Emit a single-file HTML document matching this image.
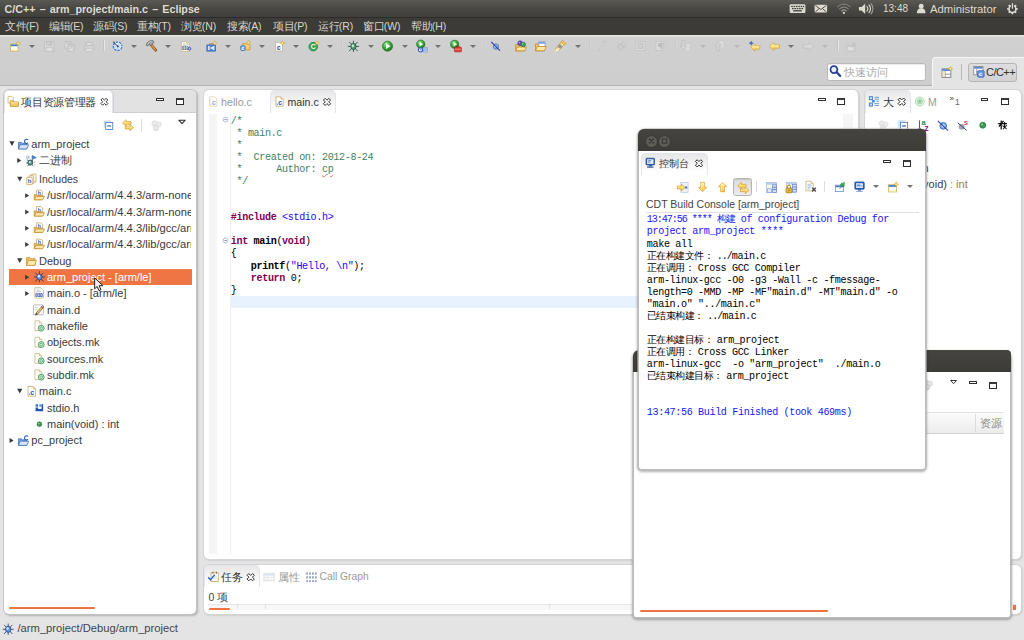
<!DOCTYPE html>
<html lang="zh">
<head>
<meta charset="utf-8">
<title>C/C++ - arm_project/main.c - Eclipse</title>
<style>
*{box-sizing:border-box;margin:0;padding:0}
html,body{width:1024px;height:640px;overflow:hidden}
body{position:relative;background:#e4e4e4;font-family:"Liberation Sans",sans-serif;font-size:11px;color:#3c3c3c}
.abs,.abs>*{position:absolute}
.t{position:absolute;white-space:pre;line-height:14px;height:14px}
svg{position:absolute;overflow:visible}
/* top panel */
#panel{left:0;top:0;width:1024px;height:18px;background:linear-gradient(#5a5954,#4a4944 45%,#403f3b);border-bottom:1px solid #2c2b28}
#panel .t{color:#dfdbd2;top:1.5px}
#menubar{left:0;top:18px;width:1024px;height:17px;background:#3c3b37}
#menubar .t{color:#d9d5cc;top:.5px;font-size:10.5px;letter-spacing:-.1px}
/* toolbar */
#toolbar{left:0;top:35px;width:1024px;height:51px;background:linear-gradient(#e9e9e9 0,#dcdcdc 1.6px,#d0d0d0 3px,#cecece);border-bottom:1px solid #b2b2b2}
#persp{left:932px;top:57px;width:92px;height:30px;background:#e4e4e4;border-left:1px solid #f6f6f6;border-top:1px solid #f6f6f6;border-top-left-radius:4px}
.dd{position:absolute;width:0;height:0;border-left:3px solid transparent;border-right:3px solid transparent;border-top:3.4px solid #727272}
.dd.dis{border-top-color:#b9b9b9}
.sep{position:absolute;width:1px;background:#b6b6b6;box-shadow:1px 0 0 #e6e6e6}
/* panels */
.pane{position:absolute;background:#fff;border-radius:5px;box-shadow:0 0 0 1px #d4d4d4,1px 1px 2px rgba(0,0,0,.25)}
.tabbar{position:absolute;left:0;top:0;right:0;height:23px;background:#e2e2e2;border-radius:5px 5px 0 0;border-bottom:1px solid #d0d0d0}
.tab{position:absolute;top:0;height:23px;background:linear-gradient(#e7e7e7,#f3f3f3 45%,#fff 88%);border-radius:5px 5px 0 0;border:1px solid #e2e4ee;border-bottom:none}
.min{position:absolute;width:7.8px;height:3.2px;border:1px solid #2d2d2d;border-radius:.5px;background:#fff}
.max{position:absolute;width:8px;height:7.3px;border:1px solid #2d2d2d;border-top:2px solid #3a3a3a;background:#fff}
.orange{position:absolute;height:2px;background:#ee7442;border-radius:1px}
/* tree */
.row{position:absolute;left:0;height:16.5px;width:100%}
.row .t{top:1.5px;font-size:11px;color:#3a3a3a}
/* mono */
.code{position:absolute;white-space:pre;font-family:"Liberation Mono",monospace;font-size:10.1px;letter-spacing:-.36px;line-height:12.07px;color:#000}
.nr{letter-spacing:-1.06px}
.cj{display:inline-block;overflow:hidden;white-space:nowrap;height:12px;vertical-align:top;font-size:9.5px;letter-spacing:-.5px}
.tb{display:inline-block;width:20px}
.cw{display:inline-block;width:20.8px;height:14px;overflow:hidden;vertical-align:top;white-space:nowrap}
.cm{color:#3f7f5f}.kw{color:#7f0055;font-weight:bold}.st{color:#2a00ff}.b{font-weight:bold}
.blue{color:#1a14ff}
/* popup windows */
.win{position:absolute;background:#fff;border-radius:6px 6px 3px 3px;box-shadow:0 0 0 1.6px #bcbcbc,0 1px 2.5px 1.8px rgba(0,0,0,.3)}
.wtitle{position:absolute;left:-1.5px;right:-1.5px;top:-1.5px;height:23px;background:linear-gradient(#45443f,#3c3b37);border-radius:6px 4px 0 0}
.wbtn{position:absolute;width:11px;height:11px;border-radius:50%;background:#5e5c57;top:6px;box-shadow:0 0 0 .5px #33322e}
</style>
</head>
<body>
<svg width="0" height="0" style="left:0;top:0"><defs>
<radialGradient id="gg" cx=".38" cy=".3" r=".8"><stop offset="0" stop-color="#a6e6a0"/><stop offset=".45" stop-color="#3cae3c"/><stop offset="1" stop-color="#156c15"/></radialGradient>
<linearGradient id="gy" x1="0" y1="0" x2="0" y2="1"><stop offset="0" stop-color="#fff7cc"/><stop offset=".5" stop-color="#fce07c"/><stop offset="1" stop-color="#f5c246"/></linearGradient>
<g id="i-arr_d"><path d="M0 0h5.200L2.600 4.700z" fill="#3a3a3a"/></g>
<g id="i-arr_r"><path d="M0 0v5L4 2.500z" fill="#3a3a3a"/></g>
<g id="i-azsort"><path d="M2.500 1.500v12" stroke="#444" stroke-width="1.200"/><path d="M.5 11.500l2 3 2-3z" fill="#444"/><text x="5" y="7.500" font-size="10" font-weight="bold" fill="#1f8a4a" font-family="Liberation Sans">a</text><text x="9" y="15.800" font-size="11" font-weight="bold" fill="#8a1f9a" font-family="Liberation Sans">z</text></g>
<g id="i-back"><path d="M1 8.2L7.2 2.6v3.2h7.6v4.8H7.2v3.2z" fill="url(#gy)" stroke="#d39a26" stroke-width=".9" stroke-linejoin="round"/><path d="M3.2 8l3-2.8v1.9h7.4" stroke="#fff3b8" stroke-width=".8" fill="none"/></g>
<g id="i-binaries"><g stroke="#274a44" stroke-width="1" fill="none"><path d="M2.500 6.500l2.500 2M1.500 11h3M3 15l2.500-2M11 15l-2-2"/></g><circle cx="7" cy="10.500" r="3.400" fill="#5a9a90" stroke="#224a44"/><circle cx="6.400" cy="9.800" r="1.300" fill="#cfe8e0"/><path d="M9.500 1v8" stroke="#444" stroke-width="1"/><path d="M10 1.500l5 2.300-5 2.300z" fill="#3f86d6" stroke="#2a5fae" stroke-width=".6"/><path d="M2.500 1.500v4M5 1.500v4" stroke="#7a8aa8" stroke-width="1.100"/><path d="M13 9v2M13 12.500v2" stroke="#aaa" stroke-width="1"/></g>
<g id="i-bindoc"><path d="M2.5 1.5h7.5l3.5 3.5v9.5h-11z" fill="#fff" stroke="#c9ae6e"/><path d="M10 1.5v3.5h3.5" fill="#f3e8c7" stroke="#c9ae6e" stroke-width=".8"/><path d="M4.5 4.5h4M4.5 6.5h6" stroke="#9fb9e2"/><text x="2.9" y="13.3" font-size="6.2" font-weight="bold" fill="#27479b" font-family="Liberation Sans" letter-spacing="-.3">010</text><circle cx="13.6" cy="11.2" r="1.9" fill="none" stroke="#27479b" stroke-width="1"/></g>
<g id="i-blkstar"><g stroke="#111" stroke-width="1.900" fill="none"><path d="M5.500 1v13.500M1 5.500h13M2 10l3.500-4.500M9 1.500L5.500 5.500M10.500 3v9"/><path d="M7.500 8.500l6 5M14 8l-6 6" stroke-width="1.500"/></g></g>
<g id="i-bug"><g stroke="#1d3b33" stroke-width="1.05" fill="none" stroke-linecap="round"><path d="M8 1v3.5M2.6 2.6l3.2 3.2M13.4 2.6l-3.2 3.2M.8 8.4h4.2M15.2 8.4h-4.2M2.4 14.6l3.4-3.6M13.6 14.6l-3.4-3.6M8 15.6v-3"/></g><ellipse cx="8" cy="8.4" rx="3.7" ry="4.3" fill="#4b9c7e" stroke="#1d4a3c"/><ellipse cx="7.2" cy="7.4" rx="1.7" ry="2.1" fill="#c2e6c6"/></g>
<g id="i-bug_d"><g stroke="#bdbdbd" stroke-width="1" fill="none"><path d="M3 4l3 2.5M13 4l-3 2.5M2 9h3.5M14 9h-3.5M3.5 14l3-2.5"/></g><ellipse cx="7.6" cy="9.2" rx="3.4" ry="3.8" fill="#cfcfcf" stroke="#bdbdbd"/><circle cx="11.6" cy="5" r="2.6" fill="#d4d4d4" stroke="#bdbdbd" stroke-width=".8"/></g>
<g id="i-buildcfg"><circle cx="8" cy="8" r="5.7" fill="#f2f7fd" stroke="#3f7cc0" stroke-width="1.9"/><circle cx="8" cy="8" r="5.7" fill="none" stroke="#eaf2fb" stroke-width="2.1" stroke-dasharray="1.2 3.27"/><circle cx="8" cy="8" r="3.2" fill="none" stroke="#9cc0e6" stroke-width=".8"/><circle cx="8.3" cy="8.2" r="1.5" fill="#24508c"/><path d="M2.2 1.8L8 7.8" stroke="#33406f" stroke-width="1.3"/><path d="M2 1.5l2.6 .6l-2 2z" fill="#566"/></g>
<g id="i-callgraph"><g fill="#9aa8c4"><rect x="1.500" y="2" width="2.400" height="3"/><rect x="5.200" y="2" width="2.400" height="3"/><rect x="9" y="2" width="2.400" height="3"/><rect x="12.700" y="2" width="2.400" height="3"/><rect x="1.500" y="7" width="2.400" height="3"/><rect x="5.200" y="7" width="2.400" height="3"/><rect x="9" y="7" width="2.400" height="3"/><rect x="12.700" y="7" width="2.400" height="3"/><rect x="1.500" y="12" width="2.400" height="2.500"/><rect x="5.200" y="12" width="2.400" height="2.500"/><rect x="9" y="12" width="2.400" height="2.500"/><rect x="12.700" y="12" width="2.400" height="2.500"/></g></g>
<g id="i-cfile"><path d="M2.500 1.500h7l3 3v10h-10z" fill="#fff" stroke="#c4a25a"/><path d="M9.500 1.500v3h3" fill="#f3e8c7" stroke="#c4a25a" stroke-width=".8"/><rect x="3.600" y="11" width="1.600" height="1.500" fill="#5f86d0"/><text x="5.600" y="12.600" font-size="9.500" font-weight="bold" fill="#2c54b4" font-family="Liberation Sans">c</text></g>
<g id="i-cfile_g"><path d="M2.500 1.500h7l3 3v10h-10z" fill="#fff" stroke="#dcc99a"/><rect x="3.600" y="11" width="1.600" height="1.500" fill="#b4c6ea"/><text x="5.600" y="12.600" font-size="9.500" font-weight="bold" fill="#8fa8dc" font-family="Liberation Sans">c</text></g>
<g id="i-clearcon"><path d="M1.500 1.500h6.500l3 3v9.500h-9.500z" fill="#fff" stroke="#c9ae6e"/><path d="M8 1.500v3h3" fill="#f3e8c7" stroke="#c9ae6e" stroke-width=".8"/><path d="M3.500 5.500h4M3.500 7.500h5.500M3.500 9.500h4.500M3.500 11.500h3" stroke="#8fb0e0" stroke-width="1"/><path d="M9.500 10l4.800 4.800M14.300 10L9.500 14.800" stroke="#4a4a4a" stroke-width="1.800"/></g>
<g id="i-collapse"><path d="M2.500 11.500v-9h9" fill="none" stroke="#9eb7de" stroke-width="1"/><rect x="4.500" y="4.500" width="10" height="10" fill="#fff" stroke="#4a7cc8" stroke-width="1.200"/><path d="M6.800 9.500h5.400" stroke="#2c57a8" stroke-width="1.600"/></g>
<g id="i-con1"><rect x="1.500" y="1.500" width="13" height="12.500" fill="#f4f8e4" stroke="#9cb4dc" stroke-width=".9"/><rect x="2" y="2" width="12" height="2.400" fill="#b9cdee"/><rect x="9.500" y="4.500" width="5" height="9.500" fill="#dce6f8" stroke="#5f86cc" stroke-width=".9"/><path d="M10 7.500h4M10 10.500h4" stroke="#3f68b8" stroke-width="1"/><rect x="3" y="9.500" width="5" height="4.500" fill="#e6ecfa" stroke="#7f9cd4" stroke-width=".8"/></g>
<g id="i-con2"><rect x="1.500" y="1.500" width="13" height="12.500" fill="#f4f8e4" stroke="#9cb4dc" stroke-width=".9"/><rect x="2" y="2" width="12" height="2.400" fill="#b9cdee"/><rect x="9.500" y="4.500" width="5" height="9.500" fill="#dce6f8" stroke="#5f86cc" stroke-width=".9"/><path d="M10 7.500h4M10 10.500h4" stroke="#3f68b8" stroke-width="1"/><rect x="3" y="9.500" width="5" height="4.500" fill="#e6ecfa" stroke="#7f9cd4" stroke-width=".8"/><rect x="1" y="9" width="7.500" height="6" rx="1" fill="#f0bf3c" stroke="#a8780e" stroke-width=".9"/><path d="M2.800 9V7.200a2 2 0 0 1 4 0V9" fill="none" stroke="#a8780e" stroke-width="1.200"/><rect x="4.200" y="11" width="1.200" height="2" fill="#7a5408"/></g>
<g id="i-console"><rect x="1.500" y="1.500" width="12" height="9.500" rx="1" fill="#2f64b8" stroke="#1d4488"/><rect x="3" y="3" width="9" height="6.500" fill="#e9f1fc"/><path d="M4 5h5M4 7h3.500" stroke="#2f64b8" stroke-width="1"/><path d="M5.500 11v2h4v-2" fill="#2f64b8"/><path d="M3 14h9" stroke="#1d4488" stroke-width="1.600"/></g>
<g id="i-cpersp"><rect x="1.500" y="1.500" width="12" height="11" fill="#fff" stroke="#7a7a8a"/><rect x="2" y="2" width="11" height="2.400" fill="#5f86cc"/><path d="M5 4.500v8M5 8.500h8.500" stroke="#8a8a9a" stroke-width=".9"/><rect x="6.500" y="7" width="8.500" height="8.500" rx="1.200" fill="#6f9ce6" stroke="#2a54a8"/><text x="8" y="14.300" font-size="8" font-weight="bold" fill="#fff" font-family="Liberation Sans">c</text></g>
<g id="i-cproj"><path d="M1.500 5.500h4l1.200 1.400h5.800v7.600h-11z" fill="#7ea6e2" stroke="#3a66b4"/><path d="M1.500 14.500l2.400-5.800h11.600l-2.400 5.800z" fill="#d4e3f9" stroke="#3a66b4" stroke-linejoin="round"/><path d="M14.800 2.200a2.900 2.900 0 1 0 0 4" fill="none" stroke="#2f5cae" stroke-width="1.500"/></g>
<g id="i-cursor"><path d="M1 1v12.500l2.900-2.700 2 4.700 2.300-1-2-4.600h4.200z" fill="#f2f2f2" stroke="#1c1c1c" stroke-width="1.100" stroke-linejoin="round"/></g>
<g id="i-dfile"><rect x="1.500" y="1.500" width="13" height="13" rx="1" fill="#fafafa" stroke="#a9a9a9"/><path d="M3.500 5h4M3.500 7.500h3" stroke="#c8c8c8"/><path d="M5 12.200L11.800 4.200l2 1.700L7 13.900l-2.800 1z" fill="#f1c84c" stroke="#4a4a4a" stroke-width=".8"/><path d="M11.800 4.200l1.400-1.600 2 1.700-1.400 1.600z" fill="#e58aa8" stroke="#4a4a4a" stroke-width=".7"/><path d="M4.200 14.900L5 12.200 7 13.900z" fill="#333"/></g>
<g id="i-dispcon"><rect x="1.500" y="1.500" width="13" height="10" rx="1" fill="#2c62c0" stroke="#1c4494"/><rect x="3.200" y="3.200" width="9.600" height="6.600" fill="#dfeafb"/><rect x="4.200" y="5" width="5" height="2.500" fill="#5f8fdc"/><path d="M9.500 7h2.500" stroke="#2c62c0"/><path d="M6 11.500v2h4v-2" fill="#2c62c0"/><path d="M3.500 14.500h9" stroke="#7f9cd4" stroke-width="1.400"/></g>
<g id="i-downy"><path d="M8 15L2 8.800h3.200V1.500h5.600v7.300H14z" fill="url(#gy)" stroke="#d39a26" stroke-width=".9" stroke-linejoin="round"/><path d="M6.400 2.600v7.200" stroke="#fff3b8" stroke-width=".9"/></g>
<g id="i-exe"><g stroke="#1f2f5c" stroke-width="1.100" fill="none" stroke-linecap="round"><path d="M8 .8v3.500M2.600 2.600l3.200 3.200M13.400 2.600l-3.200 3.200M.8 8.400h4.200M15.200 8.400h-4.200M2.400 14.600l3.400-3.600M13.600 14.600l-3.400-3.600M8 15.600v-3"/></g><ellipse cx="8" cy="8.400" rx="3.800" ry="4.300" fill="#5b8fe0" stroke="#1f3f8c"/><ellipse cx="7.200" cy="7.400" rx="1.700" ry="2" fill="#d6e6fb"/></g>
<g id="i-filt_d"><circle cx="5.500" cy="5.500" r="3.600" fill="#e3e3e3" stroke="#d2d2d2"/><circle cx="11" cy="6.500" r="3" fill="#e6e6e6" stroke="#d4d4d4"/><circle cx="7" cy="11" r="3.600" fill="#dedede" stroke="#cecece"/></g>
<g id="i-fold"><circle cx="3" cy="3" r="2.500" fill="#fff" stroke="#9fb2cc" stroke-width=".8"/><path d="M1.600 3h2.800" stroke="#7f94b4" stroke-width=".9"/></g>
<g id="i-folder"><path d="M1.500 3.500h4.500l1.200 1.500h6.300v9.500h-12z" fill="#efc06a" stroke="#c08a2a"/><path d="M1.500 14.500l2.500-7h11.500l-2.500 7z" fill="#fde9ac" stroke="#c08a2a" stroke-linejoin="round"/></g>
<g id="i-func"><circle cx="8" cy="8" r="3.300" fill="#3f9650" stroke="#2a7a3c" stroke-width=".8"/><circle cx="7.200" cy="7.200" r="1.100" fill="#8fd29c"/></g>
<g id="i-fwd_d"><path d="M15 8.2L8.800 2.600v3.200H1.200v4.800h7.600v3.200z" fill="#d9d9d9" stroke="#bdbdbd" stroke-width=".9" stroke-linejoin="round"/></g>
<g id="i-hammer"><path d="M6.8 5.8L13.3 13.6" stroke="#7d4413" stroke-width="3.6" stroke-linecap="round"/><path d="M6.8 5.8L13.3 13.6" stroke="#c98a4c" stroke-width="2.1" stroke-linecap="round"/><path d="M7.2 5.6l5.4 6.6" stroke="#e6b57c" stroke-width=".7"/><path d="M1.2 7.2C2 4 5 1 9.6 1.4L11.2 3.6L7 7.9L5.4 6.2L3.2 8.2Z" fill="#a1a1a1" stroke="#5c5c5c" stroke-width=".9" stroke-linejoin="round"/><path d="M3 6.2C4 4.2 6 2.6 9 2.6" stroke="#d6d6d6" stroke-width=".9" fill="none"/></g>
<g id="i-hidefld"><circle cx="8.400" cy="8.400" r="4.600" fill="#7fb0ea" stroke="#2f68c0" stroke-width="1.200"/><circle cx="8.400" cy="8.400" r="2.200" fill="#d6e6fa"/><path d="M1 1.600L15 15" stroke="#2b3da4" stroke-width="1.400"/></g>
<g id="i-hidestat"><circle cx="6.500" cy="10" r="3.600" fill="#a9a9a9" stroke="#8a8a8a" stroke-width=".8"/><path d="M1 4.500L13.500 15" stroke="#2b3da4" stroke-width="1.300"/><text x="9.800" y="7.200" font-size="8" font-weight="bold" fill="#d0283c" font-family="Liberation Sans">S</text></g>
<g id="i-inc"><rect x="2.500" y="3" width="3.800" height="3.800" fill="#2f6fd0"/><rect x="8.400" y="3" width="3.200" height="3.800" fill="#5b94e6"/><path d="M2.500 8h4v2.500h5.500v-7.500h2.500v11h-12z" fill="#1f56b6"/></g>
<g id="i-incfold"><path d="M4.500 1.500h6.500l2 2v7h-8.500z" fill="#fff" stroke="#c4a25a"/><text x="6.400" y="8.600" font-size="7" font-weight="bold" fill="#2e58b8" font-family="Liberation Sans">h</text><path d="M1.500 7.500h3.500l1 1.200h6.500v5.800h-11z" fill="#efc06a" stroke="#c08a2a"/><path d="M1.500 14.500l2.300-4.600h11.700l-2.300 4.600z" fill="#fde6a6" stroke="#c08a2a" stroke-linejoin="round"/></g>
<g id="i-includes"><path d="M7.500 1.500h6v10h-6z" fill="#fff" stroke="#c4a25a"/><path d="M4.500 3.500h6v10h-6z" fill="#fff" stroke="#c4a25a"/><path d="M1.500 5.500h7v9.500h-7z" fill="#fffdf2" stroke="#c4a25a"/><text x="2.800" y="13.200" font-size="7.500" font-weight="bold" fill="#2e58b8" font-family="Liberation Sans">h</text></g>
<g id="i-kbd"><rect x=".5" y=".5" width="20" height="11" rx="1.500" fill="#dfdbd2"/><g fill="#3c3b37"><rect x="2.500" y="2.500" width="2" height="1.600"/><rect x="5.500" y="2.500" width="2" height="1.600"/><rect x="8.500" y="2.500" width="2" height="1.600"/><rect x="11.500" y="2.500" width="2" height="1.600"/><rect x="14.500" y="2.500" width="2" height="1.600"/><rect x="17.500" y="2.500" width="1.500" height="1.600"/><rect x="3.500" y="5.200" width="2" height="1.600"/><rect x="6.500" y="5.200" width="2" height="1.600"/><rect x="9.500" y="5.200" width="2" height="1.600"/><rect x="12.500" y="5.200" width="2" height="1.600"/><rect x="15.500" y="5.200" width="2" height="1.600"/><rect x="5" y="8" width="11" height="1.600"/></g></g>
<g id="i-lastedit"><path d="M2.4 9L8 4v2.8h7v4.6H8v2.8z" fill="url(#gy)" stroke="#d39a26" stroke-width=".9" stroke-linejoin="round"/><path d="M4.4 8.8l2.6-2.4v1.7h6.8" stroke="#fff3b8" stroke-width=".8" fill="none"/><path d="M2.8 0L3.6 2.2L5.8 3L3.6 3.8L2.8 6L2 3.8L-.2 3L2 2.2Z" fill="#3b6fd0" stroke="#1f4aa0" stroke-width=".5"/></g>
<g id="i-link"><path d="M.8 5l4.700-4.200v2.400h6.300v3.600H5.500v2.400z" fill="url(#gy)" stroke="#d39a26" stroke-width=".9" stroke-linejoin="round"/><path d="M15.400 11l-4.700-4.200v2.400H4.400v3.600h6.300v2.400z" fill="url(#gy)" stroke="#d39a26" stroke-width=".9" stroke-linejoin="round"/></g>
<g id="i-magnify"><circle cx="6.500" cy="6.500" r="4.400" fill="#e8effa" stroke="#2a3f9c" stroke-width="2.300"/><path d="M10 10l4.500 4.500" stroke="#2a3f9c" stroke-width="2.800" stroke-linecap="round"/><path d="M4.300 5.500a2.600 2.600 0 0 1 2.500-1.800" stroke="#fff" stroke-width="1" fill="none"/></g>
<g id="i-mail"><rect x=".6" y=".6" width="15.800" height="9.800" rx="1" fill="#dfdbd2"/><path d="M1.500 1.500l7 5.200 7-5.200M1.500 9.800l5-4.300M15.500 9.800l-5-4.300" fill="none" stroke="#3c3b37" stroke-width="1.100"/></g>
<g id="i-maketgt"><circle cx="8" cy="8" r="6.300" fill="#eaf6ea" stroke="#9fd2a8" stroke-width="1.200"/><circle cx="8" cy="8" r="3.600" fill="#bfe4c4" stroke="#8fca9a" stroke-width="1"/><circle cx="8" cy="8" r="1.500" fill="#6fb87c"/></g>
<g id="i-marker"><path d="M2.200 14L11.400 3.400" stroke="#c4933a" stroke-width="5.400" stroke-linecap="butt"/><path d="M2.200 14L11.400 3.400" stroke="#fadf92" stroke-width="4" stroke-linecap="butt"/><path d="M3.400 14.400L12 4.600" stroke="#fff3c8" stroke-width="1.100"/><path d="M9.600 1.600l4.600 3.900-1.800 2.100-4.600-3.900z" fill="#f6c75a" stroke="#c4933a" stroke-width=".8"/><circle cx="6.400" cy="9.200" r="2" fill="#9a9aa8" stroke="#70707e" stroke-width=".6"/><path d="M.6 15.600l1-3.600 3.400 2.800z" fill="#fffbe6" stroke="#e0d29a" stroke-width=".5"/></g>
<g id="i-mkfile"><path d="M2.500 1.500h6l3 3v10h-9z" fill="#fff" stroke="#c9ae6e"/><path d="M8.500 1.500v3h3" fill="#f3e8c7" stroke="#c9ae6e" stroke-width=".8"/><circle cx="10.800" cy="11.300" r="3.900" fill="#dff3e2" stroke="#3a9a54" stroke-width="1.200"/><circle cx="10.800" cy="11.300" r="1.800" fill="none" stroke="#3a9a54" stroke-width="1"/></g>
<g id="i-new"><rect x="1.5" y="4.5" width="10.5" height="10" fill="#fffdf0" stroke="#c9a94f"/><rect x="2" y="5" width="9.5" height="2.6" fill="#3f80d2"/><path d="M2 13.5h9.5" stroke="#f3e6a8" stroke-width="1.4"/><path d="M12.3 0.30000000000000027L13.224 2.676L15.600000000000001 3.6L13.224 4.524L12.3 6.9L11.376000000000001 4.524L9.0 3.6L11.376000000000001 2.676Z" fill="#fbd94c" stroke="#c9991a" stroke-width=".6" stroke-linejoin="round"/><circle cx="12.3" cy="3.6" r="0.9899999999999999" fill="#fff6c0"/></g>
<g id="i-newcfile"><path d="M2.5 2.5h9.5v12h-9.5z" fill="#fff" stroke="#b9ad90"/><path d="M3.5 13.5h7.5" stroke="#e4e0d4"/><text x="4.2" y="12.4" font-size="9.6" font-weight="bold" fill="#2a46b8" font-family="Liberation Sans">c</text><path d="M11.8 0.19999999999999973L12.696000000000002 2.5039999999999996L15.0 3.4L12.696000000000002 4.296L11.8 6.6L10.904 4.296L8.600000000000001 3.4L10.904 2.5039999999999996Z" fill="#fbd94c" stroke="#c9991a" stroke-width=".6" stroke-linejoin="round"/><circle cx="11.8" cy="3.4" r="0.96" fill="#fff6c0"/></g>
<g id="i-newclass"><circle cx="7.2" cy="8.8" r="6.2" fill="#2f9f50" stroke="#1a7a36"/><circle cx="7.2" cy="8.8" r="5" fill="none" stroke="#5dc27a" stroke-width=".7"/><text x="3.6" y="12.3" font-size="9.6" font-weight="bold" fill="#fff" font-family="Liberation Sans">C</text><path d="M12.6 0.3999999999999999L13.468 2.6319999999999997L15.7 3.5L13.468 4.368L12.6 6.6L11.732 4.368L9.5 3.5L11.732 2.6319999999999997Z" fill="#fbd94c" stroke="#c9991a" stroke-width=".6" stroke-linejoin="round"/><circle cx="12.6" cy="3.5" r="0.9299999999999999" fill="#fff6c0"/></g>
<g id="i-newcon"><rect x="1.500" y="4.500" width="11.500" height="10" fill="#fffdf0" stroke="#c9a94f"/><rect x="2" y="5" width="10.500" height="2.500" fill="#3f80d2"/><path d="M2 13.700h10.500" stroke="#f3e6a8" stroke-width="1.200"/><path d="M12.3 0.3999999999999999L13.252 2.848L15.700000000000001 3.8L13.252 4.752L12.3 7.199999999999999L11.348 4.752L8.9 3.8L11.348 2.848Z" fill="#fbd94c" stroke="#c9991a" stroke-width=".6" stroke-linejoin="round"/><circle cx="12.3" cy="3.8" r="1.02" fill="#fff6c0"/></g>
<g id="i-newcproj"><path d="M5 6V4.300h5.500V6" fill="none" stroke="#a07a6a" stroke-width="1.100"/><rect x="1.500" y="6" width="12" height="8.500" fill="#4f86dc" stroke="#2a5cb4"/><rect x="3" y="7.500" width="9" height="5.500" fill="#dbe8fb"/><text x="5" y="13" font-size="6.800" font-weight="bold" fill="#2a5cb4" font-family="Liberation Sans">C</text><path d="M12.6 0.19999999999999973L13.496 2.5039999999999996L15.8 3.4L13.496 4.296L12.6 6.6L11.703999999999999 4.296L9.399999999999999 3.4L11.703999999999999 2.5039999999999996Z" fill="#fbd94c" stroke="#c9991a" stroke-width=".6" stroke-linejoin="round"/><circle cx="12.6" cy="3.4" r="0.96" fill="#fff6c0"/></g>
<g id="i-newsrcf"><path d="M4.5 4.5h3.6l1.2 1.6h5.2v7.4h-10z" fill="#f7cf6a" stroke="#c58d26"/><path d="M5 7h9" stroke="#fbe6a8"/><rect x="1.5" y="7.5" width="6.4" height="6.8" rx="1.4" fill="#7fa9e8" stroke="#3766b6"/><text x="2.7" y="13.2" font-size="6.8" font-weight="bold" fill="#fff" font-family="Liberation Sans">c</text><path d="M12.4 0.19999999999999973L13.268 2.4319999999999995L15.5 3.3L13.268 4.168L12.4 6.4L11.532 4.168L9.3 3.3L11.532 2.4319999999999995Z" fill="#fbd94c" stroke="#c9991a" stroke-width=".6" stroke-linejoin="round"/><circle cx="12.4" cy="3.3" r="0.9299999999999999" fill="#fff6c0"/></g>
<g id="i-nextann_d"><rect x="6" y="5" width="8" height="10" fill="#dadada" stroke="#c6c6c6" stroke-width=".8"/><path d="M3.2 1.5h3.6v7h2.6L5 14 .6 8.5h2.6z" fill="#d4d4d4" stroke="#bdbdbd" stroke-width=".9" stroke-linejoin="round"/></g>
<g id="i-objfile"><path d="M2.500 1.500h7.500l3.500 3.500v9.500h-11z" fill="#fff" stroke="#c9ae6e"/><path d="M4.500 4.500h4M4.500 6.500h6" stroke="#9fb9e2"/><rect x="3" y="8.500" width="10" height="5.500" fill="#e4ecfa"/><text x="3" y="13.600" font-size="6.200" font-weight="bold" fill="#27479b" font-family="Liberation Sans" letter-spacing="-.35">010</text></g>
<g id="i-openfold"><path d="M1.5 5.5h4l1.2 1.4h6.4v7.6h-11.6z" fill="#efc06a" stroke="#c08a2a"/><rect x="5.8" y="3" width="8" height="6.5" fill="#fff" stroke="#6d8fca" stroke-width=".9"/><rect x="6.2" y="3.4" width="7.2" height="1.8" fill="#5c8ad8"/><path d="M1.5 14.5l2.3-5.6h11.6l-2.3 5.6z" fill="#fde6a6" stroke="#c08a2a" stroke-linejoin="round"/></g>
<g id="i-openpersp"><rect x="1.500" y="3.500" width="11.500" height="11" fill="#fff" stroke="#6a6a7a"/><rect x="2" y="4" width="10.500" height="2.400" fill="#5f86cc"/><path d="M5.500 6.500v8M5.500 10.500h7.500" stroke="#6a6a7a" stroke-width=".9"/><rect x="2.500" y="7" width="2.500" height="7" fill="#f6e9b4"/><path d="M12.4 0.2999999999999998L13.268 2.532L15.5 3.4L13.268 4.268L12.4 6.5L11.532 4.268L9.3 3.4L11.532 2.532Z" fill="#fbd94c" stroke="#c9991a" stroke-width=".6" stroke-linejoin="round"/><circle cx="12.4" cy="3.4" r="0.9299999999999999" fill="#fff6c0"/></g>
<g id="i-opentype"><path d="M1.5 6.5h4l1.2 1.4h6.4v6.6h-11.6z" fill="#efc06a" stroke="#c08a2a"/><path d="M1.5 14.5l2.3-5h11.6l-2.3 5z" fill="#fde6a6" stroke="#c08a2a" stroke-linejoin="round"/><circle cx="7.2" cy="4.6" r="3.1" fill="#6a4fc4" stroke="#3f2b8a" stroke-width=".7"/><circle cx="6.3" cy="3.7" r="1" fill="#b9a8f0"/><circle cx="11.4" cy="6.2" r="3" fill="#39a458" stroke="#1c6d34" stroke-width=".7"/><circle cx="10.6" cy="5.4" r=".9" fill="#a6e3b4"/></g>
<g id="i-outline"><g fill="#cfe2f8" stroke="#3f80d2" stroke-width="1.300"><rect x="1.700" y="1.700" width="4" height="4"/><rect x="1.700" y="10.300" width="4" height="4"/></g><rect x="5.400" y="6.200" width="3.200" height="3.200" fill="#3f80d2"/><path d="M8.500 2.500h6M8.500 5h6M11 7.800h3.500M8.500 11h6M8.500 13.500h6" stroke="#5f94dc" stroke-width="1.200"/></g>
<g id="i-pe"><path d="M1.5 1.500h5l2 2v7h-7z" fill="#fff" stroke="#c4a96a"/><path d="M4.500 7.500h4l1.200 1.500h5.800v6h-11z" fill="#f7cf66" stroke="#c08a20"/><path d="M5 10h10" stroke="#fce9a8"/></g>
<g id="i-pen_d"><path d="M3 13.5L11.5 2.5l2 1.6L5 14.5l-2.6 1z" fill="#d8d8d8" stroke="#bdbdbd" stroke-width=".9"/><path d="M9 2l4 1" stroke="#bdbdbd"/></g>
<g id="i-pil_d"><rect x="2" y="2" width="12" height="12" fill="#d9d9d9" stroke="#c4c4c4"/><path d="M9.2 4.5v8M11.3 4.5v8M12.5 4.5H7.4a2.3 2.3 0 0 0 0 4.6h1.8" fill="none" stroke="#bbb" stroke-width="1.2"/><path d="M5.2 6.8a2.2 2.2 0 0 1 2.2-2.3h1.8v4.6H7.4a2.2 2.2 0 0 1-2.2-2.3z" fill="#bbb"/></g>
<g id="i-pin_d"><rect x="1.5" y="6.5" width="10.500" height="8" fill="#dedede" stroke="#bdbdbd"/><rect x="2" y="7" width="9.500" height="2" fill="#c9c9c9"/><path d="M8 9.500l3.500-4.500M10 2.500l4 3.200-1.200 1.500-4-3.200z" fill="#d0d0d0" stroke="#bdbdbd" stroke-width="1"/></g>
<g id="i-pincon"><rect x="1.500" y="5.500" width="11.500" height="9" fill="#fff" stroke="#5f86cc"/><rect x="2" y="6" width="10.500" height="2.400" fill="#3f7cd4"/><path d="M7.500 10.500l3.500-4" stroke="#555" stroke-width="1"/><path d="M10.400 2.600l4 3.300-1.800 2.200-4-3.300z" fill="#3fae54" stroke="#1d7a30" stroke-width=".8"/><circle cx="13.200" cy="3.200" r="1.500" fill="#59c46c" stroke="#1d7a30" stroke-width=".6"/></g>
<g id="i-power"><g stroke="#dfdbd2" fill="none"><circle cx="7.500" cy="7.500" r="4.300" stroke-width="2"/><path d="M7.500 1v2M7.500 12v2M1 7.500h2M12 7.500h2M2.900 2.900l1.400 1.400M10.700 10.700l1.400 1.400M2.900 12.100l1.400-1.400M10.700 4.300l1.400-1.400" stroke-width="2.200"/></g><path d="M5.800 0h3.400v5h-3.400z" fill="#45443f"/><path d="M7.500 .8v5.700" stroke="#dfdbd2" stroke-width="1.500" stroke-linecap="round"/></g>
<g id="i-prevann_d"><rect x="6" y="1" width="8" height="10" fill="#dadada" stroke="#c6c6c6" stroke-width=".8"/><path d="M3.2 15h3.6V8h2.6L5 2.5.6 8h2.6z" fill="#d4d4d4" stroke="#bdbdbd" stroke-width=".9" stroke-linejoin="round"/></g>
<g id="i-print_d"><rect x="4.5" y="2.5" width="7" height="4.5" fill="#dedede" stroke="#bdbdbd"/><rect x="1.5" y="6.5" width="13" height="6" rx="1.2" fill="#d3d3d3" stroke="#bcbcbc"/><rect x="3.5" y="11" width="9" height="3.2" fill="#e1e1e1" stroke="#bdbdbd" stroke-width=".7"/></g>
<g id="i-props"><rect x="1.500" y="3.500" width="13" height="9.500" fill="#f3f3f3" stroke="#bdbdbd"/><rect x="2" y="4" width="12" height="2.500" fill="#c9d4e6"/><path d="M2 9h12M6.500 6.500v6" stroke="#d6d6d6"/></g>
<g id="i-run"><circle cx="8" cy="8" r="6.8" fill="url(#gg)" stroke="#1c6e1c" stroke-width=".9"/><path d="M5.9 4.2v7.6l6-3.8z" fill="#fff"/></g>
<g id="i-runext"><circle cx="6.5" cy="5.5" r="5" fill="url(#gg)" stroke="#1c6e1c" stroke-width=".8"/><path d="M5 2.8v5.4l4.4-2.7z" fill="#fff"/><circle cx="6.2" cy="12.3" r="2.6" fill="#fff" stroke="#2c62c0" stroke-width="1.3"/><path d="M6.2 10.6v1.9h1.6" stroke="#2c62c0" stroke-width=".8" fill="none"/><rect x="10" y="9.6" width="4.6" height="5.4" fill="#b9cdf0" stroke="#7e9ad2" stroke-width=".7"/><path d="M10.5 11.2h3.6M10.5 12.6h3.6" stroke="#7e9ad2" stroke-width=".6"/></g>
<g id="i-runlast"><circle cx="6.5" cy="5.5" r="5" fill="url(#gg)" stroke="#1c6e1c" stroke-width=".8"/><path d="M5 2.8v5.4l4.4-2.7z" fill="#fff"/><path d="M8.6 9.2v-1.3h3.6v1.3" stroke="#a8201c" stroke-width="1" fill="none"/><rect x="6.2" y="9.2" width="8.6" height="5.6" rx=".8" fill="#e2403a" stroke="#a8201c" stroke-width=".8"/><path d="M6.5 11.6h8" stroke="#f7a09c" stroke-width=".8"/></g>
<g id="i-save_d"><path d="M1.5 1.5h13v13h-13z" fill="#d7d7d7" stroke="#bdbdbd"/><rect x="4.5" y="1.5" width="7" height="5" fill="#cecece" stroke="#bdbdbd" stroke-width=".7"/><rect x="4" y="9" width="8" height="5.5" fill="#dfdfdf" stroke="#bdbdbd" stroke-width=".7"/><rect x="8.8" y="2.6" width="1.6" height="2.8" fill="#bdbdbd"/></g>
<g id="i-saveall_d"><path d="M1.5 1.5h9v9h-9z" fill="#d9d9d9" stroke="#bfbfbf"/><rect x="3.5" y="1.5" width="5" height="3" fill="#cfcfcf" stroke="#bfbfbf" stroke-width=".6"/><path d="M5.5 5.5h9v9h-9z" fill="#d7d7d7" stroke="#bdbdbd"/><rect x="7.5" y="5.5" width="5" height="3" fill="#cdcdcd" stroke="#bdbdbd" stroke-width=".6"/><rect x="7.2" y="10.5" width="5.6" height="4" fill="#e0e0e0" stroke="#bdbdbd" stroke-width=".6"/></g>
<g id="i-showout"><rect x="5.500" y="1.500" width="9.500" height="13" fill="#eef3fb" stroke="#b9c6de" stroke-width=".9"/><rect x="11.200" y="6.800" width="2.600" height="2.600" fill="#2f64b8"/><path d="M11 8.200L6.200 3.600v2.700H.8v3.800h5.400v2.700z" fill="url(#gy)" stroke="#d39a26" stroke-width=".9" stroke-linejoin="round"/></g>
<g id="i-skipbp"><circle cx="8.6" cy="8.6" r="3.9" fill="#8fb4ea" stroke="#3a63b4" stroke-width="1.1"/><circle cx="7.6" cy="7.6" r="1.3" fill="#d8e6fa"/><path d="M1.6 1.8L14.6 14.4" stroke="#2b3da4" stroke-width="1.5"/></g>
<g id="i-sq_d"><rect x="2" y="2" width="12" height="12" fill="#d9d9d9" stroke="#c4c4c4"/><rect x="5" y="5" width="6" height="6" fill="#d0d0d0" stroke="#bdbdbd"/></g>
<g id="i-tasks"><rect x="4.500" y="2.500" width="9.500" height="11.500" fill="#fff" stroke="#c4a25a"/><path d="M7 1v3M11.500 1v3" stroke="#8a6a2a" stroke-width="1.200"/><path d="M6.500 7h5.500M6.500 9.500h5.500" stroke="#b9c8e4"/><path d="M.8 8.500l3 3.500 5.500-7" fill="none" stroke="#2f68c0" stroke-width="1.900"/></g>
<g id="i-upy"><path d="M8 1L2 7.200h3.200v7.300h5.600V7.200H14z" fill="url(#gy)" stroke="#d39a26" stroke-width=".9" stroke-linejoin="round"/><path d="M6.400 13.400V6.200" stroke="#fff3b8" stroke-width=".9"/></g>
<g id="i-user"><circle cx="5.500" cy="3.400" r="2.900" fill="#dfdbd2"/><path d="M.5 11.500c0-4.500 2.200-5.800 5-5.800s5 1.300 5 5.800z" fill="#dfdbd2"/></g>
<g id="i-vmenu"><path d="M.7 .7h7.600L4.500 4.800z" fill="#fff" stroke="#2a2a2a" stroke-width="1.200" stroke-linejoin="round"/></g>
<g id="i-vol"><path d="M.5 4.500h3l4-3.800v11.600l-4-3.800h-3z" fill="#dfdbd2"/><g fill="none" stroke="#dfdbd2" stroke-linecap="round"><path d="M9.500 4a3.500 3.500 0 0 1 0 5" stroke-width="1.300"/><path d="M11.800 2.200a6.200 6.200 0 0 1 0 8.600" stroke-width="1.300"/><path d="M14 .7a8.600 8.600 0 0 1 0 11.600" stroke-width="1.200" opacity=".6"/></g></g>
<g id="i-wclose"><path d="M1 1l4 4M5 1L1 5" stroke="#3a3935" stroke-width="1.500" stroke-linecap="round"/></g>
<g id="i-wifi"><g fill="none" stroke="#dfdbd2" stroke-linecap="round"><path d="M1 4.800a10.500 10.500 0 0 1 15 0" stroke-width="1.400" opacity=".32"/><path d="M3.300 7.300a7.300 7.300 0 0 1 10.400 0" stroke-width="1.400" opacity=".4"/><path d="M5.700 9.700a4 4 0 0 1 5.600 0" stroke-width="1.400" opacity=".55"/></g><circle cx="8.500" cy="12" r="1.300" fill="#dfdbd2"/></g>
<g id="i-wmax"><rect x="1" y="1" width="4.500" height="4.500" fill="none" stroke="#3a3935" stroke-width="1.200"/></g>
<g id="i-xclose"><path d="M1 3.400L3.400 1 6 3.600 8.600 1 11 3.400 8.400 6 11 8.600 8.600 11 6 8.400 3.400 11 1 8.600 3.600 6z" fill="#fff" stroke="#262626" stroke-width="1.350" stroke-linejoin="round"/></g>
</defs></svg>

<!-- ===== Ubuntu top panel ===== -->
<div id="panel" class="abs">
  <div class="t" style="left:4.5px;font-weight:bold;font-size:10.7px;word-spacing:1.3px">C/C++ – arm_project/main.c – Eclipse</div>
  <div class="t" style="left:883px;top:2px;font-size:10px">13:48</div>
  <div class="t" style="left:930px;font-size:11.3px">Administrator</div>
</div>

<!-- ===== Menu bar ===== -->
<div id="menubar" class="abs">
  <div class="t" style="left:5px"><span class="cw">文件</span>(F)</div>
  <div class="t" style="left:49px"><span class="cw">编辑</span>(E)</div>
  <div class="t" style="left:93px"><span class="cw">源码</span>(S)</div>
  <div class="t" style="left:137px"><span class="cw">重构</span>(T)</div>
  <div class="t" style="left:181px"><span class="cw">浏览</span>(N)</div>
  <div class="t" style="left:227px"><span class="cw">搜索</span>(A)</div>
  <div class="t" style="left:273px"><span class="cw">项目</span>(P)</div>
  <div class="t" style="left:318px"><span class="cw">运行</span>(R)</div>
  <div class="t" style="left:363px"><span class="cw">窗口</span>(W)</div>
  <div class="t" style="left:411px"><span class="cw">帮助</span>(H)</div>
</div>

<!-- ===== Main toolbar ===== -->
<div id="toolbar" class="abs"></div>
<div id="persp" class="abs"></div>
<div id="tbicons" class="abs" style="left:0;top:0"><i class="dd" style="left:28.7px;top:45px"></i><i class="dd" style="left:131.2px;top:45px"></i><i class="dd" style="left:165.2px;top:45px"></i><i class="dd" style="left:225.0px;top:45px"></i><i class="dd" style="left:258.7px;top:45px"></i><i class="dd" style="left:293.2px;top:45px"></i><i class="dd" style="left:327.2px;top:45px"></i><i class="dd" style="left:367.5px;top:45px"></i><i class="dd" style="left:401.5px;top:45px"></i><i class="dd" style="left:435.4px;top:45px"></i><i class="dd" style="left:469.7px;top:45px"></i><i class="dd" style="left:575.0px;top:45px"></i><i class="dd" style="left:787.9px;top:45px"></i><i class="dd dis" style="left:700.0px;top:45px"></i><i class="dd dis" style="left:734.2px;top:45px"></i><i class="dd dis" style="left:822.1px;top:45px"></i><i class="sep" style="left:102.5px;top:39.5px;height:11px;background:#c4c4c4;box-shadow:1px 0 0 #e6e6e6"></i><i class="sep" style="left:836.8px;top:40px;height:11px;background:#c4c4c4;box-shadow:1px 0 0 #e6e6e6"></i><i class="sep" style="left:199.6px;top:40px;height:11px;background:#cacaca;box-shadow:1px 0 0 #d4d4d4"></i><i class="sep" style="left:341.4px;top:40px;height:11px;background:#cacaca;box-shadow:1px 0 0 #d4d4d4"></i><i class="sep" style="left:483.8px;top:40px;height:11px;background:#cacaca;box-shadow:1px 0 0 #d4d4d4"></i><i class="sep" style="left:589px;top:40px;height:11px;background:#cacaca;box-shadow:1px 0 0 #d4d4d4"></i><i class="sep" style="left:675px;top:40px;height:11px;background:#cacaca;box-shadow:1px 0 0 #d4d4d4"></i></div>

<!-- quick access + perspective -->
<div class="abs" style="left:827px;top:62.5px;width:99px;height:18px;background:#fff;border:1px solid #b9b9b9;border-radius:2.5px;box-shadow:inset 0 1px 1px rgba(0,0,0,.08)">
  <div class="t" style="left:15.5px;top:1px;font-size:10.5px;color:#a9a9a9">快速访问</div>
</div>
<div class="sep" style="left:961px;top:64px;height:16px"></div>
<div class="abs" style="left:968px;top:62.5px;width:49px;height:19px;background:linear-gradient(#dedede,#d2d2d2);border:1px solid #b5b5b5;border-radius:3px">
  <div class="t" style="left:17px;top:1.5px;font-size:11px;color:#333;letter-spacing:-.55px">C/C++</div>
</div>

<!-- ===== Project Explorer ===== -->
<div id="pe" class="pane" style="left:4px;top:90px;width:191.5px;height:524px;box-shadow:0 0 0 1px #c4c4c4,1.5px 1.5px 2px rgba(0,0,0,.22)">
  <div class="tabbar"></div>
  <div class="tab" style="left:0;width:109px;background:#fff;box-shadow:1px 0 0 #cfcfcf"></div>
  <div class="t" style="left:17.3px;top:4.5px;font-size:10.5px;letter-spacing:-.3px;color:#333">项目资源管理器</div>
  <div class="min" style="left:152px;top:8px"></div>
  <div class="max" style="left:172px;top:8px"></div>
  <div class="sep" style="left:137px;top:29px;height:13px;background:#ddd;box-shadow:none"></div>
  <div id="tree" class="abs" style="left:0;top:45.5px;width:191px;height:320px">
    <div class="row" style="top:-0.20px"><div class="t" style="left:27.3px">arm_project</div></div>
    <div class="row" style="top:16.30px"><div class="t" style="left:35px">二进制</div></div>
    <div class="row" style="top:35.15px"><div class="t" style="left:35px;font-size:10.5px">Includes</div></div>
    <div class="row" style="top:51.47px"><div class="t" style="left:43px;width:144px;overflow:hidden;font-size:11.2px">/usr/local/arm/4.4.3/arm-none-linux-gnueabi</div></div>
    <div class="row" style="top:67.79px"><div class="t" style="left:43px;width:144px;overflow:hidden;font-size:11.2px">/usr/local/arm/4.4.3/arm-none-linux-gnueabi</div></div>
    <div class="row" style="top:84.11px"><div class="t" style="left:43px;width:144px;overflow:hidden;font-size:11.2px">/usr/local/arm/4.4.3/lib/gcc/arm-none</div></div>
    <div class="row" style="top:100.43px"><div class="t" style="left:43px;width:144px;overflow:hidden;font-size:11.2px">/usr/local/arm/4.4.3/lib/gcc/arm-none</div></div>
    <div class="row" style="top:116.75px"><div class="t" style="left:35px">Debug</div></div>
    <div class="row" style="top:133.07px"><div class="abs" style="left:4.5px;top:.45px;width:183px;height:15.8px;background:linear-gradient(#f38558,#ef7644 1.5px,#ee7442)"></div><div class="t" style="left:43px;color:#fff">arm_project - [arm/le]</div></div>
    <div class="row" style="top:149.39px"><div class="t" style="left:43px">main.o - [arm/le]</div></div>
    <div class="row" style="top:165.71px"><div class="t" style="left:43px">main.d</div></div>
    <div class="row" style="top:182.03px"><div class="t" style="left:43px">makefile</div></div>
    <div class="row" style="top:198.35px"><div class="t" style="left:43px">objects.mk</div></div>
    <div class="row" style="top:214.67px"><div class="t" style="left:43px">sources.mk</div></div>
    <div class="row" style="top:230.99px"><div class="t" style="left:43px">subdir.mk</div></div>
    <div class="row" style="top:247.31px"><div class="t" style="left:35px">main.c</div></div>
    <div class="row" style="top:263.63px"><div class="t" style="left:43px">stdio.h</div></div>
    <div class="row" style="top:279.95px"><div class="t" style="left:43px">main(void) : int</div></div>
    <div class="row" style="top:296.27px"><div class="t" style="left:27.3px">pc_project</div></div>
  </div>
  <div class="orange" style="left:4.5px;top:517px;width:86.5px"></div>
</div>

<!-- ===== Editor ===== -->
<div id="ed" class="pane" style="left:203.5px;top:89.5px;width:654px;height:469px">
  <div class="tab" style="left:66.5px;width:66px"></div>
  <div class="t" style="left:17.5px;top:5px;font-size:10.7px;color:#9a9a9a">hello.c</div>
  <div class="t" style="left:84px;top:5px;font-size:10.6px;color:#333">main.c</div>
  <div class="min" style="left:614.5px;top:8.5px"></div>
  <div class="max" style="left:633.5px;top:8.5px"></div>
  <div class="abs" style="left:5px;top:24px;width:8.5px;height:440px;background:#f5f5f5"></div>
  <div class="abs" style="left:26px;top:24px;width:1px;height:440px;background:#f1f1f1"></div>
  <div class="abs" style="left:27.5px;top:206px;width:612px;height:12.2px;background:#e8f2fe"></div>
  <div class="abs" style="left:639.8px;top:24.5px;width:9.3px;height:439px;background:#f6f6f6"></div>
<div class="code" style="left:27.3px;top:26.3px"><span class="cm">/*
 * main.c
 *
 *  Created on: 2012-8-24
 *      Author: <span style="text-decoration:underline wavy #e8704a .5px;text-underline-offset:1px">cp</span>
 */</span>


<span class="kw">#include</span> <span class="st">&lt;stdio.h&gt;</span>

<span class="kw">int</span> <span class="b">main</span>(<span class="kw">void</span>)
{
<span class="tb"></span><span class="b">printf</span>(<span class="st">"Hello, \n"</span>);
<span class="tb"></span><span class="kw">return</span> 0;
}</div>
</div>

<!-- ===== Outline ===== -->
<div id="ol" class="pane" style="left:865px;top:89.5px;width:155.5px;height:469px">
  <div class="tab" style="left:0;width:45.5px"></div>
  <div class="t" style="left:17.5px;top:5px;font-size:11px;color:#333">大</div>
  <div class="t" style="left:63px;top:5px;font-size:10.5px;color:#9a9a9a">M</div>
  <div class="t" style="left:84.5px;top:2px;font-size:8px;color:#333;letter-spacing:-.5px">»</div>
  <div class="t" style="left:90px;top:5.5px;font-size:8.5px;color:#666">1</div>
  <div class="min" style="left:115.5px;top:8.5px"></div>
  <div class="max" style="left:135.5px;top:8.5px"></div>
  <div class="t" style="left:31.3px;top:71px;font-size:11px">stdio.h</div>
  <div class="t" style="left:30.6px;top:87.3px;font-size:11px">main(void)<span style="color:#95824f"> : int</span></div>
</div>

<!-- ===== Bottom (Tasks) ===== -->
<div id="bt" class="pane" style="left:203.5px;top:564.5px;width:817px;height:49.5px">
  <div class="tab" style="left:0;width:56px;height:22px"></div>
  <div class="t" style="left:17.5px;top:5.5px;font-size:11px;color:#333">任务</div>
  <div class="t" style="left:74px;top:5.5px;font-size:10.5px;color:#9a9a9a">属性</div>
  <div class="t" style="left:116px;top:5.5px;font-size:10.3px;color:#9a9a9a">Call Graph</div>
  <div class="t" style="left:5px;top:25px;font-size:10.5px;color:#444">0 项</div>
  <div class="abs" style="left:4px;top:39.5px;width:809px;height:6px;border-top:1px solid #e6e6e6;background:#f7f7f7"></div>
  <div class="abs" style="left:33px;top:40.5px;width:1px;height:4px;background:#e0e0e0"></div>
  <div class="abs" style="left:61px;top:40.5px;width:1px;height:4px;background:#e0e0e0"></div>
  <div class="abs" style="left:345.5px;top:40.5px;width:1px;height:4px;background:#e0e0e0"></div>
  <div class="orange" style="left:5px;top:43px;width:21.5px"></div>
  <div class="abs" style="left:809.5px;top:40.5px;width:2.5px;height:4.5px;background:#ee7442"></div>
</div>

<!-- ===== Status bar ===== -->
<div class="t" style="left:17.5px;top:621px;font-size:11.2px;color:#444">/arm_project/Debug/arm_project</div>

<svg width="1024" height="640" viewBox="0 0 1024 640" style="left:0;top:0;pointer-events:none">
<use href="#i-kbd" transform="translate(789.23 3.87) scale(0.79)"/>
<use href="#i-mail" transform="translate(814.14 4.21) scale(0.79)"/>
<use href="#i-wifi" transform="translate(836.72 2.82) scale(0.84)"/>
<use href="#i-vol" transform="translate(858.47 3.04) scale(0.89)"/>
<use href="#i-user" transform="translate(916.53 3.41) scale(0.85)"/>
<use href="#i-power" transform="translate(1006.36 2.89) scale(0.81)"/>
<use href="#i-new" transform="translate(9.44 40.84) scale(0.71)"/>
<use href="#i-save_d" transform="translate(43.39 40.64) scale(0.74)"/>
<use href="#i-saveall_d" transform="translate(63.76 40.36) scale(0.74)"/>
<use href="#i-print_d" transform="translate(83.14 40.36) scale(0.77)"/>
<use href="#i-buildcfg" transform="translate(111.66 40.41) scale(0.74)"/>
<use href="#i-hammer" transform="translate(145.17 39.46) scale(0.79)"/>
<use href="#i-bindoc" transform="translate(179.55 40.66) scale(0.73)"/>
<use href="#i-newcproj" transform="translate(205.78 40.66) scale(0.72)"/>
<use href="#i-newsrcf" transform="translate(239.6 40.34) scale(0.71)"/>
<use href="#i-newcfile" transform="translate(273.62 40.54) scale(0.74)"/>
<use href="#i-newclass" transform="translate(308.23 40.54) scale(0.7)"/>
<use href="#i-bug" transform="translate(347.68 40.35) scale(0.72)"/>
<use href="#i-run" transform="translate(381.61 40.26) scale(0.74)"/>
<use href="#i-runext" transform="translate(415.35 39.64) scale(0.83)"/>
<use href="#i-runlast" transform="translate(449.43 39.88) scale(0.81)"/>
<use href="#i-skipbp" transform="translate(490.08 40.73) scale(0.68)"/>
<use href="#i-opentype" transform="translate(514.55 39.68) scale(0.77)"/>
<use href="#i-openfold" transform="translate(534.4 39.64) scale(0.77)"/>
<use href="#i-marker" transform="translate(554.99 39.25) scale(0.78)"/>
<use href="#i-pen_d" transform="translate(596.06 39.42) scale(0.78)"/>
<use href="#i-bug_d" transform="translate(615.25 40.16) scale(0.74)"/>
<use href="#i-sq_d" transform="translate(634.25 39.85) scale(0.77)"/>
<use href="#i-pil_d" transform="translate(654.35 39.85) scale(0.77)"/>
<use href="#i-nextann_d" transform="translate(679.57 39.46) scale(0.77)"/>
<use href="#i-prevann_d" transform="translate(714.27 39.98) scale(0.73)"/>
<use href="#i-lastedit" transform="translate(749.21 41) scale(0.71)"/>
<use href="#i-back" transform="translate(768.76 40.59) scale(0.72)"/>
<use href="#i-fwd_d" transform="translate(802.74 40.67) scale(0.71)"/>
<use href="#i-pin_d" transform="translate(845.82 40.37) scale(0.74)"/>
<use href="#i-magnify" transform="translate(828.85 64.55) scale(0.78)"/>
<use href="#i-openpersp" transform="translate(940.86 66.13) scale(0.77)"/>
<use href="#i-cpersp" transform="translate(972.7 65.36) scale(0.76)"/>
<use href="#i-pe" transform="translate(6.94 95.28) scale(0.74)"/>
<use href="#i-xclose" transform="translate(100.24 97.64) scale(0.69)"/>
<use href="#i-collapse" transform="translate(102.57 119.32) scale(0.7)"/>
<use href="#i-link" transform="translate(121.87 119.1) scale(0.77)"/>
<use href="#i-filt_d" transform="translate(150.41 119.21) scale(0.79)" opacity="0.75"/>
<use href="#i-cproj" transform="translate(17.37 138.31) scale(0.73)"/>
<use href="#i-binaries" transform="translate(25 154.62) scale(0.76)"/>
<use href="#i-includes" transform="translate(25.64 173.06) scale(0.77)"/>
<use href="#i-incfold" transform="translate(33.15 189.17) scale(0.73)"/>
<use href="#i-incfold" transform="translate(33.15 205.47) scale(0.73)"/>
<use href="#i-incfold" transform="translate(33.15 221.77) scale(0.73)"/>
<use href="#i-incfold" transform="translate(33.15 238.07) scale(0.73)"/>
<use href="#i-folder" transform="translate(25.48 255.12) scale(0.71)"/>
<use href="#i-exe" transform="translate(33.8 271.09) scale(0.7)"/>
<use href="#i-objfile" transform="translate(32.86 286.56) scale(0.79)"/>
<use href="#i-dfile" transform="translate(32.34 303.74) scale(0.76)"/>
<use href="#i-mkfile" transform="translate(33.09 319.73) scale(0.75)"/>
<use href="#i-mkfile" transform="translate(33.09 336.13) scale(0.75)"/>
<use href="#i-mkfile" transform="translate(33.09 352.43) scale(0.75)"/>
<use href="#i-mkfile" transform="translate(33.09 368.73) scale(0.75)"/>
<use href="#i-cfile" transform="translate(26.12 385.29) scale(0.75)"/>
<use href="#i-inc" transform="translate(34 402.4) scale(0.63)"/>
<use href="#i-func" transform="translate(33.56 418.36) scale(0.73)"/>
<use href="#i-cproj" transform="translate(17.37 434.81) scale(0.73)"/>
<use href="#i-fold" transform="translate(222.7 116.7) scale(0.97)"/>
<use href="#i-fold" transform="translate(222.7 237.6) scale(0.97)"/>
<use href="#i-cfile_g" transform="translate(207.85 95.79) scale(0.72)"/>
<use href="#i-cfile" transform="translate(274.17 95.76) scale(0.72)"/>
<use href="#i-xclose" transform="translate(322.74 97.64) scale(0.71)"/>
<use href="#i-outline" transform="translate(868.12 95.38) scale(0.75)"/>
<use href="#i-xclose" transform="translate(897.38 97.28) scale(0.73)"/>
<use href="#i-maketgt" transform="translate(914.18 95.83) scale(0.7)"/>
<use href="#i-filt_d" transform="translate(877.66 119.43) scale(0.74)" opacity="0.75"/>
<use href="#i-collapse" transform="translate(897.18 119.13) scale(0.72)"/>
<use href="#i-azsort" transform="translate(917.62 119.24) scale(0.76)"/>
<use href="#i-hidefld" transform="translate(937.09 119.71) scale(0.73)"/>
<use href="#i-hidestat" transform="translate(956.93 119.53) scale(0.73)"/>
<use href="#i-func" transform="translate(975.5 117.95) scale(0.91)"/>
<use href="#i-blkstar" transform="translate(997.54 119.88) scale(0.67)"/>
<use href="#i-inc" transform="translate(883.1 161.6) scale(0.63)"/>
<use href="#i-func" transform="translate(882.66 177.46) scale(0.73)"/>
<use href="#i-tasks" transform="translate(207.62 570.86) scale(0.76)"/>
<use href="#i-xclose" transform="translate(246.38 572.88) scale(0.72)"/>
<use href="#i-props" transform="translate(262.71 570.52) scale(0.79)" opacity="0.6"/>
<use href="#i-callgraph" transform="translate(304.99 570.78) scale(0.78)"/>
<use href="#i-exe" transform="translate(2.52 623.36) scale(0.71)"/>
<use href="#i-arr_d" transform="translate(9.35 141.35) scale(1)"/>
<use href="#i-arr_r" transform="translate(17.27 157.93) scale(0.99)"/>
<use href="#i-arr_d" transform="translate(17.15 176.75) scale(1)"/>
<use href="#i-arr_r" transform="translate(25.17 193.13) scale(0.99)"/>
<use href="#i-arr_r" transform="translate(25.17 209.43) scale(0.99)"/>
<use href="#i-arr_r" transform="translate(25.17 225.73) scale(0.99)"/>
<use href="#i-arr_r" transform="translate(25.17 242.03) scale(0.99)"/>
<use href="#i-arr_d" transform="translate(17.15 258.25) scale(1)"/>
<use href="#i-arr_r" transform="translate(25.17 274.73) scale(0.99)"/>
<use href="#i-arr_r" transform="translate(25.17 291.03) scale(0.99)"/>
<use href="#i-arr_d" transform="translate(17.15 388.85) scale(1)"/>
<use href="#i-arr_r" transform="translate(9.58 437.93) scale(0.99)"/>
<use href="#i-vmenu" transform="translate(178.24 119.55) scale(0.84)"/>
<use href="#i-cursor" transform="translate(93.76 276.98) scale(0.88)"/>
</svg>

<!-- ===== Second detached window (behind console) ===== -->
<div id="w2" class="win" style="left:634px;top:351.7px;width:375.8px;height:265.6px">
  <div class="wtitle" style="height:22px"></div>
  <div class="abs" style="left:0;top:21px;right:0;bottom:0;background:#fff;border-radius:5px 5px 3px 3px"></div>
  <div class="min" style="left:335px;top:29.5px"></div>
  <div class="max" style="left:355px;top:30px"></div>
  <div class="abs" style="left:4px;top:60px;width:366px;height:22px;background:linear-gradient(#fbfbfb,#ececec);border-top:1px solid #e2e2e2;border-bottom:1px solid #d2d2d2"></div>
  <div class="abs" style="left:341px;top:62px;width:1px;height:18px;background:#dcdcdc"></div>
  <div class="t" style="left:345.5px;top:64.5px;font-size:10.5px;color:#8a8a8a">资源</div>
  <div class="orange" style="left:6px;top:258px;width:187.5px"></div>
</div>

<svg width="1024" height="640" viewBox="0 0 1024 640" style="left:0;top:0;pointer-events:none">
<use href="#i-filt_d" transform="translate(920.86 378.15) scale(0.83)"/>
<use href="#i-vmenu" transform="translate(950.08 379.95) scale(0.78)"/>
</svg>

<!-- ===== Console detached window ===== -->
<div id="w1" class="win" style="left:639px;top:130px;width:285.5px;height:338.5px">
  <div class="wtitle" style="height:22.5px"></div>
  <div class="abs" style="left:0;top:21.5px;right:0;bottom:0;background:#fff;border-radius:5px 5px 3px 3px"></div>
  <div class="wbtn" style="left:7px;top:5.5px"></div>
  <div class="wbtn" style="left:20px;top:5.5px"></div>
  <div class="tab" style="left:2px;top:22.5px;width:66.5px;height:22px"></div>
  <div class="t" style="left:20px;top:27px;font-size:10.3px;color:#333">控制台</div>
  <div class="min" style="left:244px;top:30px"></div>
  <div class="max" style="left:264px;top:30px"></div>
  <div class="abs" style="left:94px;top:48px;width:18.7px;height:17.6px;background:linear-gradient(#dcdcdc,#ececec);border:1px solid #b4b4b4;border-radius:2.5px;box-shadow:inset 0 1px 1px rgba(0,0,0,.12)"></div>
  <i class="sep" style="left:117.4px;top:51px;height:10.5px;background:#dadada;box-shadow:none"></i>
  <i class="sep" style="left:185.2px;top:51px;height:10.5px;background:#dedede;box-shadow:none"></i>
  <i class="dd" style="left:233.8px;top:55.4px"></i>
  <i class="dd" style="left:267.7px;top:55.4px"></i>
  <div class="t" style="left:7px;top:67px;font-size:10.5px;color:#444">CDT Build Console [arm_project]</div>
  <div class="abs" style="left:7px;top:82px;width:273px;height:1px;background:#e0e0e0"></div>
<div class="code" style="left:7.8px;top:84.4px;line-height:12.07px"><span class="blue"><span class="nr">13:47:56 **** </span><span class="cj" style="width:19px">构建</span><span class="nr"> </span>of configuration Debug for
project arm_project ****</span>
make all
<span class="cj" style="width:65px">正在构建文件：</span><span class="nr"> ../</span>main.c
<span class="cj" style="width:46px">正在调用：</span><span class="nr"> </span>Cross GCC Compiler
arm-linux-gcc -O0 -g3 -Wall -c -fmessage-
length=0 -MMD -MP -MF"main.d" -MT"main.d" -o
"main.o" "../main.c"
<span class="cj" style="width:55.5px">已结束构建：</span><span class="nr"> ../</span>main.c

<span class="cj" style="width:65px">正在构建目标：</span><span class="nr"> </span>arm_project
<span class="cj" style="width:46px">正在调用：</span><span class="nr"> </span>Cross GCC Linker
arm-linux-gcc  -o "arm_project"  ./main.o
<span class="cj" style="width:74.5px">已结束构建目标：</span><span class="nr"> </span>arm_project


<span class="blue">13:47:56 Build Finished (took 469ms)</span></div>
</div>

<svg width="1024" height="640" viewBox="0 0 1024 640" style="left:0;top:0;pointer-events:none">
<use href="#i-wclose" transform="translate(648.5 138) scale(1)"/>
<use href="#i-wmax" transform="translate(661.42 137.92) scale(0.95)"/>
<use href="#i-console" transform="translate(644.95 157.15) scale(0.71)"/>
<use href="#i-xclose" transform="translate(694.66 159.01) scale(0.72)"/>
<use href="#i-showout" transform="translate(676.69 181.31) scale(0.76)"/>
<use href="#i-downy" transform="translate(697.04 181.21) scale(0.7)"/>
<use href="#i-upy" transform="translate(717.01 181.59) scale(0.7)"/>
<use href="#i-link" transform="translate(737.14 181.92) scale(0.76)"/>
<use href="#i-con1" transform="translate(765.14 181.28) scale(0.79)"/>
<use href="#i-con2" transform="translate(785.2 181.13) scale(0.78)"/>
<use href="#i-clearcon" transform="translate(804.79 180.07) scale(0.77)"/>
<use href="#i-pincon" transform="translate(834.22 181.2) scale(0.72)"/>
<use href="#i-dispcon" transform="translate(853.76 180.9) scale(0.72)"/>
<use href="#i-newcon" transform="translate(887.29 181.48) scale(0.72)"/>
</svg>
</body>
</html>
